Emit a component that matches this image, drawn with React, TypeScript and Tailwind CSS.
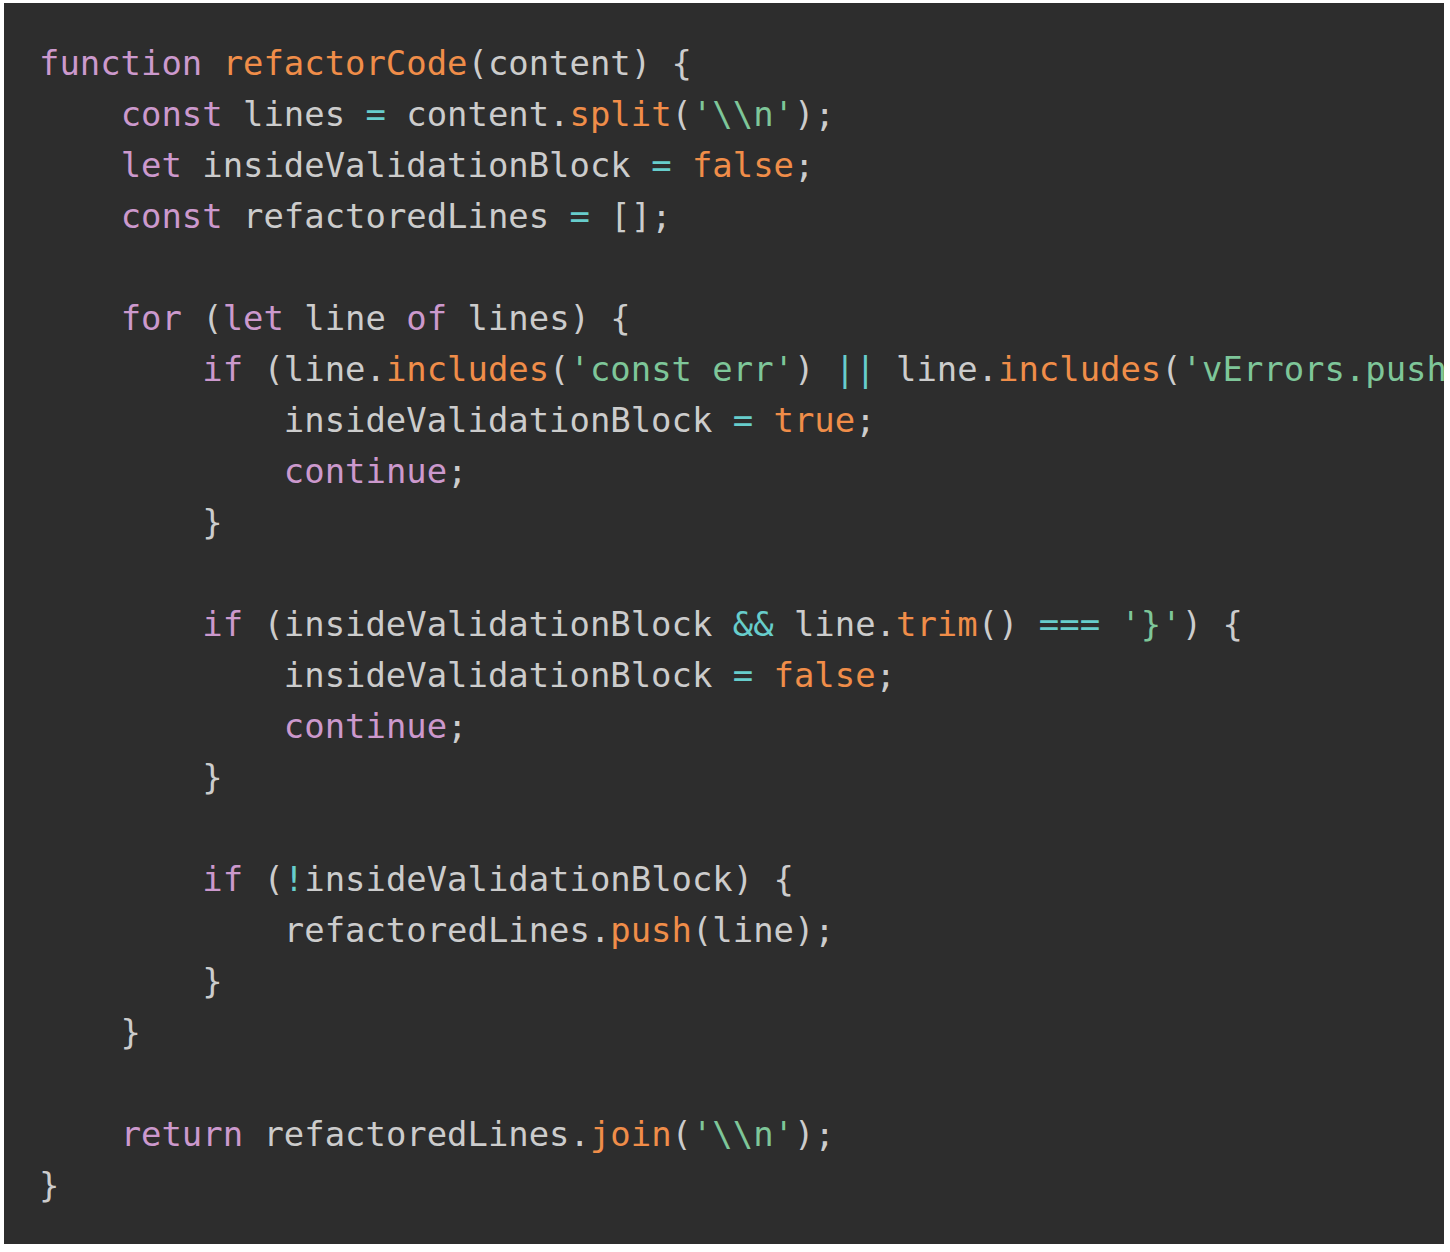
type Tok = [string, string];

const K = "text-[#cc99cd]";
const F = "text-[#f08d49]";
const S = "text-[#7ec699]";
const O = "text-[#67cdcc]";
const P = "text-[#cccccc]";

const lines: Tok[][] = [
  [[K, "function"], [P, " "], [F, "refactorCode"], [P, "(content) {"]],
  [[P, "    "], [K, "const"], [P, " lines "], [O, "="], [P, " content."], [F, "split"], [P, "("], [S, "'\\\\n'"], [P, ");"]],
  [[P, "    "], [K, "let"], [P, " insideValidationBlock "], [O, "="], [P, " "], [F, "false"], [P, ";"]],
  [[P, "    "], [K, "const"], [P, " refactoredLines "], [O, "="], [P, " [];"]],
  [],
  [[P, "    "], [K, "for"], [P, " ("], [K, "let"], [P, " line "], [K, "of"], [P, " lines) {"]],
  [[P, "        "], [K, "if"], [P, " (line."], [F, "includes"], [P, "("], [S, "'const err'"], [P, ") "], [O, "||"], [P, " line."], [F, "includes"], [P, "("], [S, "'vErrors.push'"], [P, ")) {"]],
  [[P, "            insideValidationBlock "], [O, "="], [P, " "], [F, "true"], [P, ";"]],
  [[P, "            "], [K, "continue"], [P, ";"]],
  [[P, "        }"]],
  [],
  [[P, "        "], [K, "if"], [P, " (insideValidationBlock "], [O, "&&"], [P, " line."], [F, "trim"], [P, "() "], [O, "==="], [P, " "], [S, "'}'"], [P, ") {"]],
  [[P, "            insideValidationBlock "], [O, "="], [P, " "], [F, "false"], [P, ";"]],
  [[P, "            "], [K, "continue"], [P, ";"]],
  [[P, "        }"]],
  [],
  [[P, "        "], [K, "if"], [P, " ("], [O, "!"], [P, "insideValidationBlock) {"]],
  [[P, "            refactoredLines."], [F, "push"], [P, "(line);"]],
  [[P, "        }"]],
  [[P, "    }"]],
  [],
  [[P, "    "], [K, "return"], [P, " refactoredLines."], [F, "join"], [P, "("], [S, "'\\\\n'"], [P, ");"]],
  [[P, "}"]],
];

export default function App() {
  return (
    <div className="w-[1450px] h-[1252px] bg-white pt-[3px] pl-[4px]">
      <pre
        className="w-[1440px] h-[1241px] bg-[#2d2d2d] overflow-hidden pl-[35px] pt-[35px] text-[33.9px] leading-[51px] text-[#cccccc]"
        style={{ fontFamily: '"DejaVu Sans Mono", monospace' }}
      >
        {lines.map((ln, i) => (
          <div key={i} className="h-[51px] whitespace-pre">
            {ln.map(([c, t], j) => (
              <span key={j} className={c}>
                {t}
              </span>
            ))}
          </div>
        ))}
      </pre>
    </div>
  );
}
